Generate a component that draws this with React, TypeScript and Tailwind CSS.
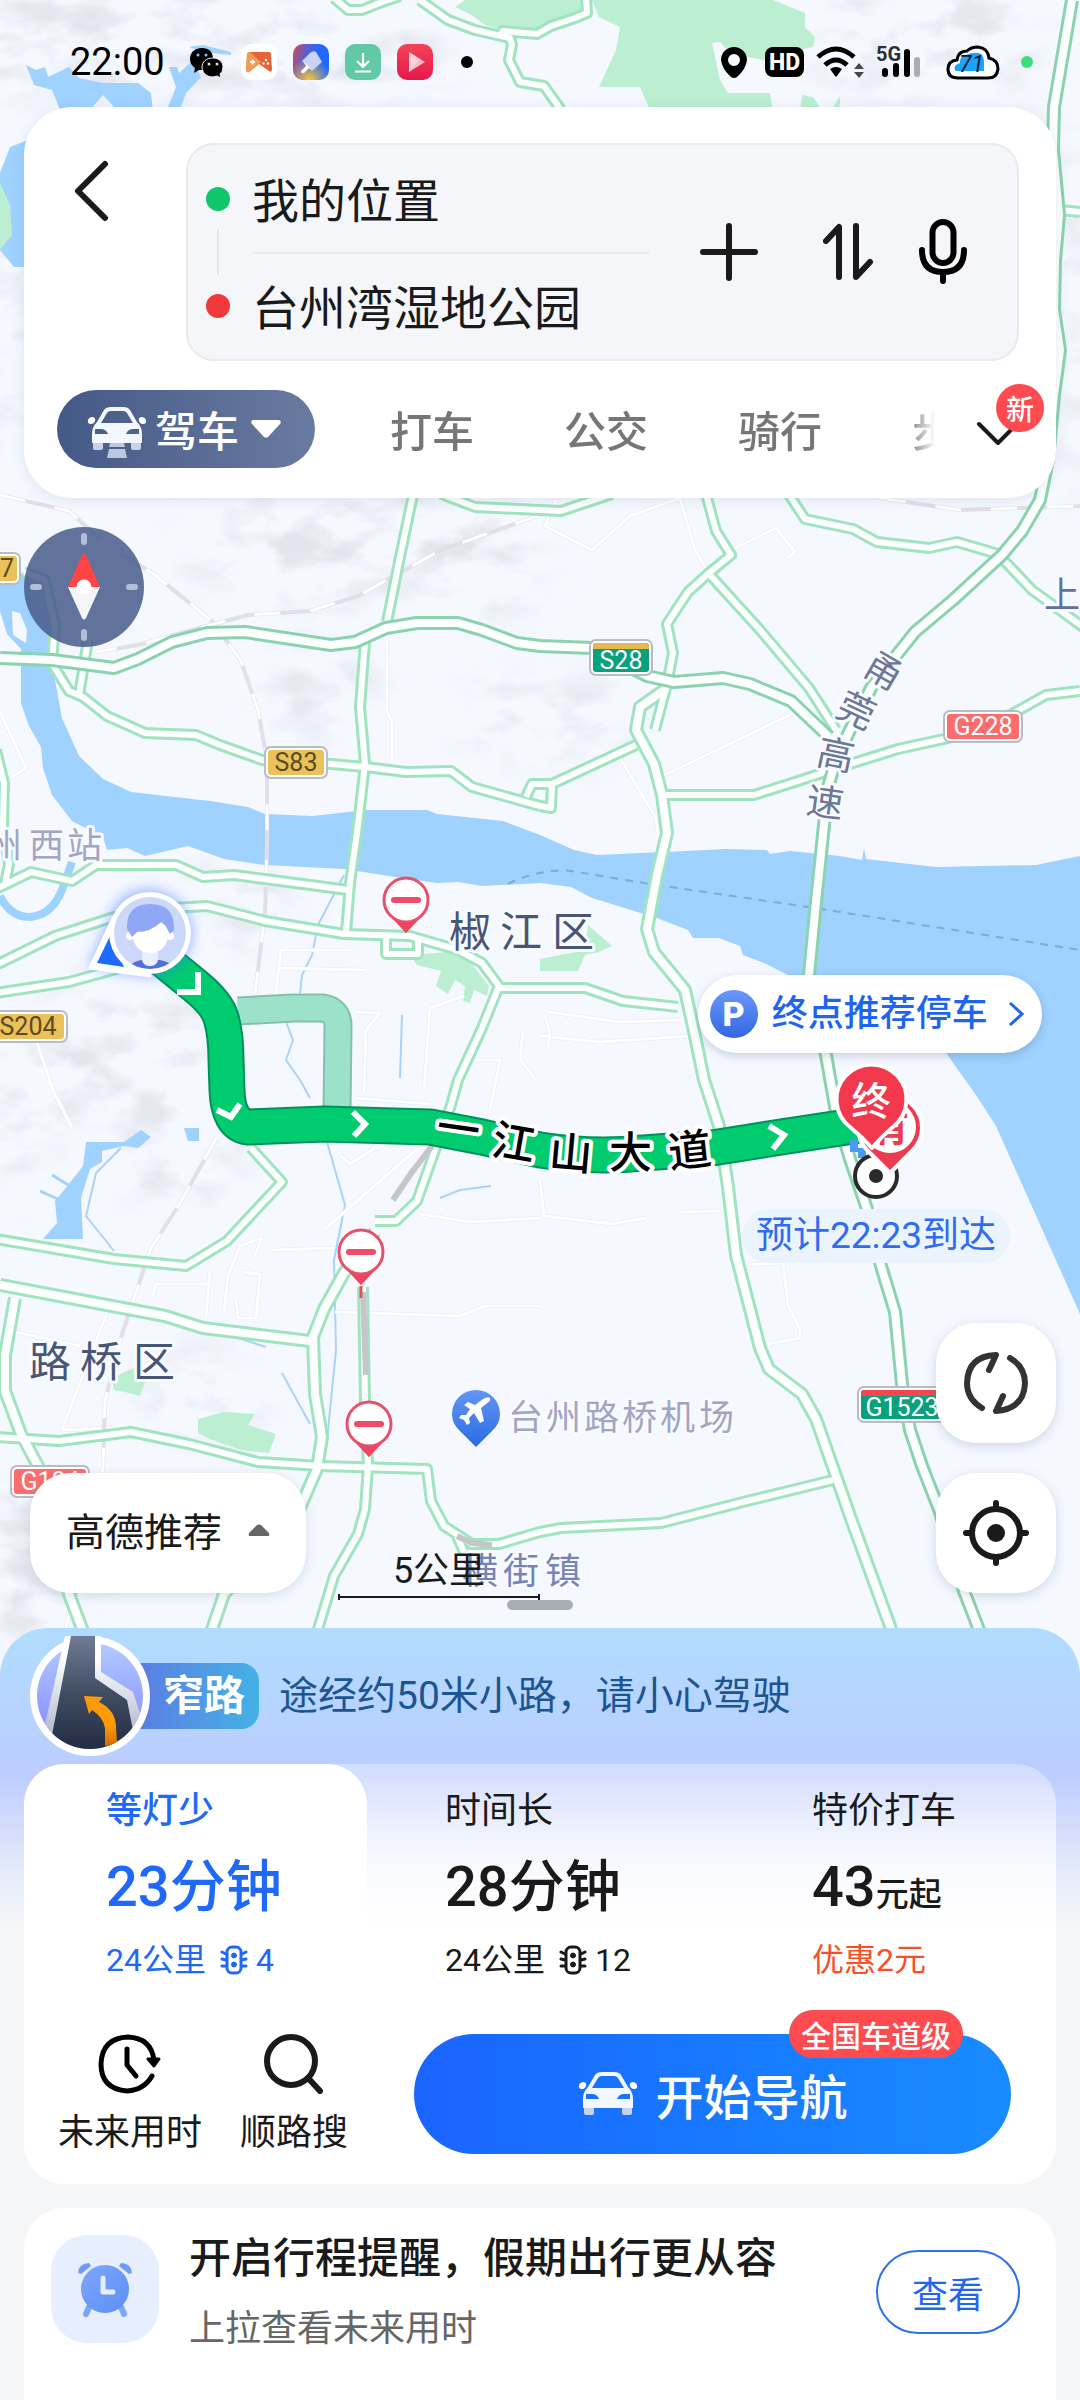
import React from "react";

const FONT = "font-[Roboto,'Noto_Sans_CJK_SC',sans-serif]";

/* ---------- map data ---------- */

const EXPRESSWAYS = [
  "M1072 0 L1054 107 L1053 150 L1059 215 L1055 260 L1054 310 L1060 350 L1054 395 L1048 460 L1040 500 L1022 531 L1002 555 L953 600 L915 632 L895 657 L871 688 L850 730 L836 760 L828 787 L824 825 L816 902 L809 975 L816 1017 L826 1055 L836 1112 L850 1159 L867 1209 L881 1266 L895 1312 L902 1384 L910 1430 L922 1466 L940 1512 L964 1591 L979 1630 L1000 1680",
  "M0 658 L52 660 L114 668 L138 659 L172 642 L207 633 L245 632 L331 645 L355 642 L386 628 L417 623 L458 623 L482 630 L517 643 L540 646 L592 648 L647 676 L674 682 L723 678 L750 684 L791 701 L829 737",
];

const MAIN_ROADS = [
  "M667 688 L640 707 L636 730 L654 764 L662 795 L667 833 L657 875 L647 929 L654 952 L685 990 L695 1036 L704 1080 L719 1126 L728 1187 L736 1255 L760 1348 L769 1369 L802 1394 L816 1419 L836 1476 L850 1516 L890 1626 L905 1680",
  "M0 1285 L165 1316 L203 1328 L310 1341",
  "M15 1298 L5 1355 L5 1391 L21 1434 L38 1466 L69 1594 L90 1650",
  "M375 1232 L344 1273 L324 1309 L313 1337 L315 1394 L322 1437 L317 1469 L300 1508 L224 1594 L205 1650",
];

const ROADS = [
  "M420 0 L448 20 L475 30 L510 38 L512 45 L509 60 L520 82 L544 86 L561 110",
  "M500 35 L503 31 L537 34 L551 26 L575 18 L587 13 L586 -4",
  "M334 -2 L348 10 L362 10 L382 2 L400 -4",
  "M1060 210 L1080 212",
  "M705 490 L716 531 L731 555 L709 573 L688 592 L667 624 L673 653 L667 684 L655 730",
  "M710 575 L760 630 L809 688 L836 730",
  "M666 795 L754 795 L798 781 L850 764 L898 749 L953 737 L1012 714 L1046 695 L1080 691",
  "M526 797 L532 784 L552 784 L636 745 M552 784 L551 808 L540 806",
  "M786 490 L805 519 L853 529 L877 542 L929 548 L957 542 L998 554 L1032 590 L1090 632",
  "M441 494 L475 507 L561 511 L612 494",
  "M414 490 L400 557 L387 622",
  "M365 642 L360 707 L365 764 L358 825 L350 883 L346 932",
  "M53 665 L69 691 L83 697 L107 716 L145 733 L196 735 L220 745 L262 760 L331 764 L365 767 L406 772 L451 771 L472 787 L540 806",
  "M24 572 L45 580 L50 604 L55 625 L52 662 M88 640 L79 695",
  "M-4 889 L31 872 L72 881 L96 865 L176 865 L203 877 L234 875 L348 890",
  "M-4 750 L4 783 L3 825 L9 864 L5 884",
  "M-4 965 L55 936 L114 917 L172 908 L207 906 L265 921 L344 934 L410 936 L458 950 L482 963 L499 986 L482 1028 L458 1080 L451 1105 L417 1201 L396 1221 L375 1221",
  "M386 936 L386 954 L418 954 L418 940",
  "M-4 993 L69 982 L131 965",
  "M499 988 L585 988 L623 1001 L678 1007",
  "M-4 1239 L114 1259 L186 1266 L227 1241 L282 1182 L251 1148",
  "M-4 1437 L59 1441 L131 1432 L189 1444 L258 1462 L320 1466 L427 1469 L431 1501 L444 1526 L472 1544 L499 1544 L540 1532 L561 1528 L661 1523 L747 1501 L833 1480",
  "M457 1536 L464 1552",
  "M363 1287 L365 1401 L368 1466 L365 1509 L358 1534 L334 1576 L319 1626 L305 1670",
];

const LANES = [
  "M556 500 L545 526 L592 550 L630 516 L680 498 L695 550 L710 575",
  "M731 550 L776 528 L795 552 L788 558",
  "M667 774 L800 710 M620 758 L656 818 L658 835",
  "M387 640 L387 712 L392 722 L392 762",
  "M275 1000 L281 950 L350 950 M278 968 L365 970",
  "M355 1012 L380 1013 L366 1030 L364 1092 M356 1098 L430 1104 M424 1090 L430 1008 L464 996",
  "M490 1110 L500 1060 L476 1060 M523 1030 L520 1060 L536 1080",
  "M545 1015 L550 1034 L548 1048 M548 1012 L620 1022 L682 1020 M540 1036 L600 1042 L690 1036",
  "M325 1229 L418 1148 M340 1155 L350 1164 L375 1148 M272 1250 L334 1248 M420 1214 L470 1222 L540 1218",
  "M152 1298 L156 1284 L208 1284 M206 1316 L210 1272 M224 1312 L228 1276 L240 1246 L262 1238 L254 1258 M236 1300 L238 1318 L256 1318 L260 1274 L244 1272",
  "M335 1312 L460 1316 L485 1306 L540 1306",
  "M15 1332 L80 1346 M108 1310 L62 1430 L112 1428",
  "M540 1180 L544 1216 L612 1224 L646 1218 M681 1212 L720 1211",
  "M745 1265 L783 1263 L788 1305 L800 1330 L800 1338 L768 1344",
  "M48 1080 L72 1128 M36 1040 L56 1098 M0 712 L26 768 L10 778",
];

const STREAMS = [
  "M121 1148 L96 1173 L86 1216 L114 1251",
  "M344 875 L318 925 L312 955 L302 975 L300 993",
  "M286 1022 L293 1040 L286 1060 L300 1080 L310 1098",
  "M402 1015 L400 1078 M327 1142 L345 1205 L334 1260 L336 1350 L326 1450",
  "M440 1198 L460 1190 L491 1186",
  "M282 1373 L310 1424 M238 1338 L266 1347",
];

const RAILS = [
  "M0 495 L69 511 L103 542 L155 575 L213 622 L241 661 L258 710 L267 760 L267 844 L265 913 L255 994",
  "M217 1137 L179 1205 L151 1248 L121 1337 L105 1401 L103 1466 L92 1540 L62 1640",
  "M540 515 L441 550 L358 596 L310 611 L248 615 L207 626 L138 645 L96 652",
  "M880 498 L960 510 L1080 506",
];

const HILLS: [number, number, number, number][] = [
  [120, 40, 190, 70],
  [330, 60, 120, 50],
  [920, 40, 120, 60],
  [1070, 300, 20, 200],
  [10, 350, 20, 140],
  [330, 545, 150, 60],
  [490, 560, 50, 60],
  [320, 690, 60, 40],
  [520, 720, 60, 40],
  [570, 720, 60, 40],
  [120, 1050, 100, 70],
  [180, 1160, 60, 50],
  [30, 1560, 70, 90],
  [200, 1400, 60, 50],
  [20, 1120, 40, 60],
  [240, 900, 50, 40],
];

function Shield({ x, y, w, label, kind }: { x: number; y: number; w: number; label: string; kind: "yellow" | "red" | "greenYellow" | "greenRed" }) {
  const strip = kind === "greenYellow" || kind === "greenRed";
  const h = strip ? 37 : 33;
  const fill = kind === "yellow" ? "#ebc15a" : kind === "red" ? "#fd6d6d" : "#08a17d";
  return (
    <g>
      <rect x={x + 1} y={y + 1} width={w - 2} height={h - 2} rx="6" fill="#fff" stroke="#b9bcc4" strokeWidth="2" />
      <rect x={x + 4} y={y + 4} width={w - 8} height={h - 8} rx="3" fill={fill} />
      {strip && <path d={`M${x + 4} ${y + 10} v-3 q0 -3 3 -3 h${w - 14} q3 0 3 3 v3 z`} fill={kind === "greenYellow" ? "#e4b94f" : "#ef4850"} />}
      <text x={x + w / 2} y={y + h - (strip ? 7 : 8)} textAnchor="middle" fontSize="25" className="font-[Roboto,sans-serif]" fill={kind === "yellow" ? "#5b4a26" : "#fff"}>
        {label}
      </text>
    </g>
  );
}

function NoEntryPin({ x, y }: { x: number; y: number }) {
  return (
    <g transform={`translate(${x} ${y})`}>
      <path d="M-14 17 H14 L0 33 Z" fill="#ec4660" />
      <circle r="22" fill="#fff" stroke="#e8506a" strokeWidth="3" />
      <path d="M-15 17 Q0 29 15 17 L0 33 Z" fill="#ec4660" />
      <path d="M-12 0 H12" stroke="#f04c66" strokeWidth="6" strokeLinecap="round" />
    </g>
  );
}

function MapCanvas() {
  return (
    <svg viewBox="0 0 1080 1680" className="absolute left-0 top-0 w-full font-['Noto_Sans_CJK_SC',sans-serif]" aria-hidden="true">
      <defs>
        <filter id="relief" x="-20%" y="-20%" width="140%" height="140%">
          <feGaussianBlur in="SourceGraphic" stdDeviation="22" result="soft" />
          <feTurbulence type="fractalNoise" baseFrequency="0.018 0.03" numOctaves="4" seed="8" result="noise" />
          <feColorMatrix in="noise" type="matrix" values="0 0 0 0 0.70  0 0 0 0 0.71  0 0 0 0 0.77  3.4 0 0 0 -1.5" result="rock" />
          <feComposite in="rock" in2="soft" operator="in" />
        </filter>
        <filter id="glow" x="-60%" y="-60%" width="220%" height="220%">
          <feGaussianBlur stdDeviation="7" />
        </filter>
        <linearGradient id="poi" x1="0" y1="0" x2="0" y2="1">
          <stop offset="0" stopColor="#6296f6" />
          <stop offset="1" stopColor="#2b6be4" />
        </linearGradient>
        <clipPath id="face">
          <circle cx="150" cy="933" r="36" />
        </clipPath>
      </defs>

      <rect width="1080" height="1680" fill="#f5f8ff" />
      <g filter="url(#relief)" opacity="0.65">
        {HILLS.map(([cx, cy, rx, ry], i) => (
          <ellipse key={i} cx={cx} cy={cy} rx={rx} ry={ry} fill="#000" />
        ))}
      </g>

      <g fill="#9fd2ff">
        <path d="M0 584 L24 572 L48 588 L52 653 L55 680 L62 718 L79 756 L103 779 L131 792 L210 801 L248 807 L265 814 L313 816 L365 810 L427 810 L437 814 L503 821 L540 835 L574 850 L597 855 L685 851 L726 849 L767 850 L770 854 L790 851 L840 856 L862 860 L864 848 L866 859 L936 867 L1036 865 L1080 856 V1314 L996 1126 L976 1095 L946 1053 L860 1010 L784 973 L764 963 L743 955 L740 946 L719 938 L693 938 L688 930 L654 917 L592 898 L571 887 L540 883 L482 886 L458 882 L437 883 L389 876 L344 869 L265 865 L224 859 L188 846 L145 856 L127 848 L107 850 L103 837 L72 821 L52 795 L43 768 L41 747 L29 726 L21 703 L21 665 L21 649 L7 634 L0 611 Z" />
        <path d="M26 65 L36 70 L45 67 L48 77 L69 67 L79 78 L103 83 L138 83 L151 93 L153 112 L115 108 L103 95 L90 110 H60 L52 90 L34 85 Z" />
        <path d="M169 67 H177 L179 73 L193 60 L201 77 L186 93 L179 112 H166 L176 87 Z" />
        <path d="M189 47 L203 45 L231 52 V55 L203 52 Z" />
        <path d="M28 140 L10 147 L0 173 V250 L14 267 H28 Z" />
        <path d="M86 1142 H124 L141 1130 L151 1137 L138 1148 L124 1146 L102 1151 V1162 L90 1169 L81 1198 L83 1239 L43 1239 L57 1223 L55 1201 L69 1184 L83 1166 Z" />
        <path d="M184 1128 H199 V1141 H188 Z" />
      </g>
      <path d="M12 611 L20 613 L27 630 L26 643 L13 635 Z" fill="#f5f8ff" />
      <path d="M0 896 Q10 917 30 917 Q52 915 62 890 L72 862" fill="none" stroke="#9fd2ff" strokeWidth="8" />
      <path d="M40 1191 L60 1200 M52 1175 L70 1186" stroke="#9fd2ff" strokeWidth="3" />

      <g fill="#bcefd2">
        <path d="M465 0 L455 7 L470 14 L485 25 L513 33 L544 30 L579 15 L589 0 Z" />
        <path d="M592 0 L599 17 L620 27 L616 50 L599 87 H640 L651 112 H773 L770 93 L728 93 L720 80 L712 43 L720 42 L730 53 L763 60 L773 55 L813 47 L815 37 L805 27 V13 L773 0 Z" />
        <path d="M800 112 L802 95 L813 97 L823 112 Z M830 112 L840 96 V112 Z" />
        <path d="M0 183 L10 205 L12 235 L0 250 Z" />
        <path d="M410 955 L448 952 L468 959 L489 986 L487 996 L474 990 L470 1003 L463 1001 L465 986 L455 980 L448 994 L436 986 L441 971 L417 965 Z" />
        <path d="M588 925 L612 946 L599 952 L585 955 L578 971 H540 V959 L585 950 Z" />
        <path d="M112 1380 L122 1373 L140 1366 L146 1380 L140 1396 L125 1392 L114 1390 Z" />
        <path d="M198 1419 L224 1412 L255 1414 L248 1425 L276 1434 L269 1453 L241 1450 L210 1439 L198 1433 Z" />
      </g>

      <g fill="none" strokeLinejoin="round">
        <g stroke="#a9d3fb" strokeWidth="2">
          {STREAMS.map((d) => (
            <path key={d} d={d} />
          ))}
        </g>
        <path d="M508 884 Q530 872 565 870 L650 884 L815 908 L1080 950" stroke="#7fabd6" strokeWidth="2" strokeDasharray="8 7" />
        <g stroke="#e6e8f0" strokeWidth="4">
          {LANES.map((d) => (
            <path key={d} d={d} />
          ))}
        </g>
        <g stroke="#fff" strokeWidth="3">
          {LANES.map((d) => (
            <path key={d} d={d} />
          ))}
        </g>
        <g stroke="#e2dfe8" strokeWidth="4">
          {RAILS.map((d) => (
            <path key={d} d={d} />
          ))}
        </g>
        <g stroke="#fff" strokeWidth="3" strokeDasharray="26 30">
          {RAILS.map((d) => (
            <path key={d} d={d} />
          ))}
        </g>

        <g stroke="#9fe4bf">
          {ROADS.map((d) => (
            <path key={d} d={d} strokeWidth="12" />
          ))}
          {MAIN_ROADS.map((d) => (
            <path key={d} d={d} strokeWidth="14" />
          ))}
        </g>
        <g stroke="#fcfffd">
          {ROADS.map((d) => (
            <path key={d} d={d} strokeWidth="6" />
          ))}
          {MAIN_ROADS.map((d) => (
            <path key={d} d={d} strokeWidth="8" />
          ))}
        </g>
        {EXPRESSWAYS.map((d) => (
          <g key={d}>
            <path d={d} stroke="#8bd3ae" strokeWidth="14" />
            <path d={d} stroke="#fcfffd" strokeWidth="8" />
          </g>
        ))}
        <path d="M363 1292 L366 1375 M432 1146 L412 1172 L393 1200 M457 1536 L472 1543 L492 1545" stroke="#c5c6ca" strokeWidth="6" />
        <path d="M361 1286 V1298" stroke="#e0525c" strokeWidth="3" />
      </g>

      <g stroke="#f8faff" strokeWidth="6" strokeLinejoin="round" paintOrder="stroke">
        <text x="449 500 552" y="947" fontSize="42" fill="#485676">椒江区</text>
        <text x="29 80 133" y="1377" fontSize="42" fill="#485676">路桥区</text>
        <text x="-13 29 67" y="858" fontSize="35" fill="#a1a5c3">州西站</text>
        <text x="508 546 584 622 660 699" y="1430" fontSize="35" fill="#a1a5c3">台州路桥机场</text>
        <text x="462 503 545" y="1584" fontSize="36" fill="#7584b6">横街镇</text>
        <text x="1044" y="608" fontSize="36" fill="#5f6fa0">上</text>
        <text x="861 834 815 805" y="673 715 764 813" rotate="30 25 12 8" fontSize="37" fill="#6d7896">甬莞高速</text>
      </g>

      <Shield x={264} y={746} w={64} label="S83" kind="yellow" />
      <Shield x={-12} y={1010} w={80} label="S204" kind="yellow" />
      <Shield x={-50} y={552} w={71} label="S327" kind="yellow" />
      <Shield x={589} y={639} w={64} label="S28" kind="greenYellow" />
      <Shield x={943} y={710} w={80} label="G228" kind="red" />
      <Shield x={857} y={1386} w={90} label="G1523" kind="greenRed" />
      <Shield x={10} y={1465} w={80} label="G104" kind="red" />

      <g fill="none" strokeLinejoin="round">
        <path d="M238 1011 L293 1008 L322 1008 Q338 1010 338 1026 L337 1115" stroke="#86c0aa" strokeWidth="29" />
        <path d="M238 1011 L293 1008 L322 1008 Q338 1010 338 1026 L337 1115" stroke="#9ce1ca" strokeWidth="25" />
        <path d="M155 953 L193 984 Q217 1003 221 1018 Q226 1034 226 1060 L227 1090 Q228 1124 248 1127 L324 1124 L430 1127 L482 1137 L540 1150 Q592 1158 643 1153 L712 1148 L781 1137 L860 1125" stroke="#00905b" strokeWidth="37" />
        <path d="M155 953 L193 984 Q217 1003 221 1018 Q226 1034 226 1060 L227 1090 Q228 1124 248 1127 L324 1124 L430 1127 L482 1137 L540 1150 Q592 1158 643 1153 L712 1148 L781 1137 L860 1125" stroke="#00cb6e" strokeWidth="33" />
        <g stroke="#fff" strokeWidth="6" strokeLinejoin="miter">
          <path d="M177 992 L198 992 L198 972" />
          <path d="M217 1110 L231 1117 L240 1104" />
          <path d="M353 1112 L365 1124 L354 1136" />
          <path d="M769 1126 L784 1135 L773 1149" />
        </g>
      </g>
      <text x="435 490 548 609 670" y="1141 1154 1167 1168 1168" rotate="8 10 5 0 -6" fontSize="43" fontWeight="500" fill="#000" stroke="#fff" strokeWidth="8" strokeLinejoin="round" paintOrder="stroke">
        一江山大道
      </text>

      <NoEntryPin x={406} y={900} />
      <NoEntryPin x={361} y={1252} />
      <NoEntryPin x={369} y={1424} />

      <path d="M476 1447 L460 1431 Q452 1424 452 1414 A24 24 0 0 1 500 1414 Q500 1424 492 1431 Z" fill="url(#poi)" />
      <path d="M464 1405 l4 -3 7 3 8 -6 q5 -3 7 -1 q1 3 -4 6 l-5 4 3 13 -4 2 -6 -10 -5 5 1 5 -3 2 -3 -5 -5 -2 2 -3 5 0 4 -6 z" fill="#fff" />

      <g>
        <path d="M89 967 L116 905 A43 43 0 1 1 146 976 Z" fill="#3e74ff" opacity="0.55" filter="url(#glow)" />
        <path d="M90 968 L113 918 L150 976 Z" fill="#fff" stroke="#fff" strokeWidth="3" strokeLinejoin="round" />
        <path d="M97 963 L110 936 L124 967 Z" fill="#1e6bff" />
        <circle cx="150" cy="933" r="41" fill="#fff" />
        <circle cx="150" cy="933" r="36" fill="#ccd8f9" />
        <g clipPath="url(#face)">
          <path d="M126 970 Q134 958 150 960 Q168 958 176 970 Z" fill="#5470df" />
          <rect x="142" y="946" width="16" height="20" rx="7" fill="#e9effc" />
          <path d="M131 928 Q152 930 162 922 L169 930 Q168 953 150 953 Q133 953 131 928 Z" fill="#fff" />
          <circle cx="130" cy="936" r="4" fill="#fff" />
          <circle cx="170" cy="936" r="4" fill="#fff" />
          <path d="M127 929 Q126 904 150 904 Q175 904 174 930 L170 934 L165 925 L161 922 Q151 932 137 932 L132 937 Z" fill="#8fa7f5" />
        </g>
      </g>

      <path d="M850 1140 h8 v8 h8 v10 h-8 v-6 h-8 z" fill="#4b9bf5" />
      <circle cx="876" cy="1176" r="21" fill="#fff" stroke="#2a2a2a" strokeWidth="4" />
      <circle cx="876" cy="1176" r="7" fill="#2a2a2a" />
      <path d="M890 1173 L868 1151 A32 32 0 1 1 912 1151 Z" fill="#ee3a4e" stroke="#fff" strokeWidth="4" strokeLinejoin="round" />
      <circle cx="890" cy="1127" r="26" fill="#fff" />
      <text x="890" y="1141" textAnchor="middle" fontSize="38" fontWeight="700" fill="#ee3a4e">有</text>
      <path d="M872 1148 Q862 1137 850 1127 A35 35 0 1 1 893 1127 Q882 1136 872 1148 Z" fill="#f2384d" stroke="#fff" strokeWidth="4" strokeLinejoin="round" />
      <text x="871" y="1115" textAnchor="middle" fontSize="39" fontWeight="500" fill="#fff">终</text>
    </svg>
  );
}

/* ---------- icons ---------- */

function CarIcon({ className, lane = false }: { className?: string; lane?: boolean }) {
  return (
    <svg viewBox="0 0 60 52" className={className} aria-hidden="true">
      <path d="M6 32 h10 v9 q0 2 -2 2 h-6 q-2 0 -2 -2 z M44 32 h10 v9 q0 2 -2 2 h-6 q-2 0 -2 -2 z" fill="#c8d3ea" />
      <path d="M1 13 q1 -3 5 -3 q3 1 2 4 q-1 3 -4 3 q-4 0 -3 -4 z M59 13 q-1 -3 -5 -3 q-3 1 -2 4 q1 3 4 3 q4 0 3 -4 z" fill="#fff" />
      <path
        fillRule="evenodd"
        d="M17 3 Q19 0 24 0 H36 Q41 0 43 3 L50 15 Q55 20 55 27 V36 H5 V27 Q5 20 10 15 Z M20 6 L14 16 H46 L40 6 Q39 4 36 4 H24 Q21 4 20 6 Z M8 22 V27 H21 Q19 22 14 22 Z M52 22 V27 H39 Q41 22 46 22 Z"
        fill="#f3f7ff"
      />
      {lane && <path d="M23 36 H37 L38 40 H22 Z M22 42 H38 L40 51 H20 Z" fill="#bcc8df" />}
    </svg>
  );
}

function TrafficLight() {
  return (
    <svg viewBox="0 0 28 30" className="h-[30px] w-7" fill="none" stroke="currentColor" strokeWidth="3" strokeLinecap="round" aria-hidden="true">
      <rect x="7" y="2" width="14" height="26" rx="5" />
      <path d="M2 7 L6 9 M2 14 L6 15 M2 21 L6 21 M26 7 L22 9 M26 14 L22 15 M26 21 L22 21" strokeWidth="3" />
      <circle cx="14" cy="10.500" r="2.500" fill="currentColor" strokeWidth="1" />
      <circle cx="14" cy="19.500" r="2.500" fill="currentColor" strokeWidth="1" />
    </svg>
  );
}

function StatusBar() {
  return (
    <div className="relative flex h-[107px] items-center px-[70px] pt-[17px] text-black">
      <time className="mr-6 text-[38px] leading-[40px]">22:00</time>
      <div className="flex items-center gap-4">
        <svg viewBox="0 0 36 36" className="size-9" aria-label="微信">
          <path d="M13 4 C5 4 1 9 1 15 C1 19 3 22 6 24 L5 29 L10 26 Q20 27 24 18 Q25 4 13 4 Z" fill="#000" />
          <path d="M24 14 C17 14 13 18 13 23 C13 29 18 33 24 33 L28 32 L32 34 L31 30 Q34 28 34 23 C34 18 30 14 24 14 Z" fill="#000" stroke="#e7effa" strokeWidth="1" />
          <circle cx="9" cy="11" r="1.500" fill="#7fc4ff" />
          <circle cx="17" cy="11" r="1.500" fill="#7fc4ff" />
          <circle cx="20" cy="20" r="1.500" fill="#f6d9a5" />
          <circle cx="28" cy="20" r="1.500" fill="#f6d9a5" />
        </svg>
        <svg viewBox="0 0 36 36" className="size-9" aria-label="游戏">
          <rect width="36" height="36" rx="10" fill="#fff" />
          <path d="M9 8 H28 Q30 8 30 11 L31 25 Q31 29 28 27 L18 20 L8 28 Q5 29 5 25 L6 11 Q6 8 9 8 Z" fill="#e8633a" />
          <path d="M9 8 L20 18 L8 28 Q5 29 5 25 L6 11 Q6 8 9 8 Z" fill="#f59a55" />
          <path d="M9 18 h5 M11.500 15.500 v5" stroke="#fff" strokeWidth="2" />
          <g fill="#fff">
            <circle cx="25" cy="16" r="1.200" />
            <circle cx="22.500" cy="19.500" r="1.200" />
            <circle cx="27" cy="19.500" r="1.200" />
          </g>
        </svg>
        <svg viewBox="0 0 36 36" className="size-9" aria-label="主题">
          <defs>
            <linearGradient id="paint" x1="0" y1="0" x2="1" y2="0.300">
              <stop offset="0" stopColor="#d8464e" />
              <stop offset="0.400" stopColor="#5a5fd0" />
              <stop offset="0.700" stopColor="#2169fb" />
            </linearGradient>
            <radialGradient id="sun" cx="0.450" cy="1" r="0.600">
              <stop offset="0" stopColor="#ffc531" />
              <stop offset="1" stopColor="#ffc531" stopOpacity="0" />
            </radialGradient>
          </defs>
          <rect width="36" height="36" rx="10" fill="url(#paint)" />
          <rect width="36" height="36" rx="10" fill="url(#sun)" />
          <path d="M17 9 Q20 6 23 8 L29 18 L19 27 L9 17 Z" fill="#c9d3f3" />
          <path d="M10 17 L19 26 L16 24 L11 29 Q8 30 8 27 L13 22 Z" fill="#fff" />
        </svg>
        <svg viewBox="0 0 36 36" className="size-9" aria-label="下载">
          <rect width="36" height="36" rx="10" fill="#62c9a7" />
          <path d="M18 9 V23 M12 17 L18 23 L24 17 M10 27.500 H26" fill="none" stroke="#fff" strokeWidth="2.200" />
        </svg>
        <svg viewBox="0 0 36 36" className="size-9" aria-label="视频">
          <defs>
            <linearGradient id="vid" x1="0" y1="0" x2="0" y2="1">
              <stop offset="0" stopColor="#f54257" />
              <stop offset="1" stopColor="#e41a4c" />
            </linearGradient>
          </defs>
          <rect width="36" height="36" rx="10" fill="url(#vid)" />
          <path d="M12 8 L28 18 L12 28 Z" fill="#fbb9c2" />
          <path d="M12 8 L23 15 L12 28 Z" fill="#fde3e6" opacity="0.600" />
        </svg>
        <span className="ml-3 size-3 rounded-full bg-black" />
      </div>
      <div className="ml-auto -mr-[23px] flex items-center">
        <svg viewBox="0 0 26 31" className="mr-[18px] h-[31px] w-[26px]" aria-label="定位">
          <path fillRule="evenodd" d="M13 0 A13 13 0 0 1 26 13 Q25 22 16 30 Q13 32 10 30 Q1 22 0 13 A13 13 0 0 1 13 0 Z M13 7 A6 6 0 1 0 13 19 A6 6 0 1 0 13 7 Z" />
        </svg>
        <span className="mr-3 flex h-[30px] w-[39px] items-center justify-center rounded-lg bg-black text-[23px] font-extrabold leading-none text-white">HD</span>
        <svg viewBox="0 0 48 32" className="mr-3 h-8 w-12" aria-label="无线网络">
          <g fill="none" stroke="#000" strokeWidth="5">
            <path d="M2 11 Q20 -5 38 11" />
            <path d="M9 19 Q20 9 31 19" />
          </g>
          <path d="M14 23 Q20 19 26 23 L21 30 Q20 31 19 30 Z" />
          <path d="M38 23 L43 17 L48 23 Z M38 26 L43 32 L48 26 Z" fill="#44474e" />
        </svg>
        <svg viewBox="0 0 46 34" className="mr-6 h-[34px] w-[46px]" aria-label="5G 信号">
          <text x="0" y="16" fontSize="20" fontWeight="700" fill="#2b2e35">5G</text>
          <rect x="6" y="23" width="6" height="9" rx="3" />
          <rect x="17" y="18" width="6" height="14" rx="3" />
          <rect x="28" y="4" width="6" height="28" rx="3" />
          <rect x="38" y="12" width="6" height="20" rx="3" fill="#a9acb3" />
        </svg>
        <svg viewBox="0 0 54 35" className="mr-[21px] h-[35px] w-[54px]" aria-label="电量 71">
          <path d="M12 33 Q2 33 2 24 Q2 16 11 15 Q12 6 21 6 Q25 2 32 2 Q42 3 43 13 Q52 15 52 24 Q51 33 42 33 Z" fill="#fff" stroke="#000" strokeWidth="3" />
          <path d="M9 25 Q7 20 14 18 Q14 10 20 10 Q28 6 35 9 Q38 11 38 18 V26 H10 Z" fill="#1aa3fb" />
          <text x="13" y="27" fontSize="23" fontStyle="italic" fill="#05182c">71</text>
        </svg>
        <span className="size-3 rounded-full bg-[#3ddc7c]" />
      </div>
    </div>
  );
}

function SearchCard() {
  return (
    <header className="relative mx-6 rounded-[48px] bg-white pb-[30px] pt-9 font-['Noto_Sans_CJK_SC',sans-serif] shadow-[0_2px_14px_rgba(60,80,120,0.12)]">
      <div className="flex items-start pl-7 pr-[37px]">
        <button aria-label="返回" className="mr-[42px] flex h-24 w-[92px] items-center pl-[21px]">
          <svg viewBox="0 0 36 64" className="h-16 w-9" fill="none" stroke="#1a1a1a" strokeWidth="6" strokeLinecap="round" strokeLinejoin="round">
            <path d="M32 5 L5 32 L32 59" />
          </svg>
        </button>
        <div className="flex flex-1 items-center rounded-[28px] border-2 border-[#e8eaee] bg-[#f4f6fa] pr-[50px]">
          <div className="relative flex min-w-0 flex-1 flex-col text-[47px] text-[#1a1a1a]">
            <label className="flex h-[107px] items-center gap-[22px] pl-[18px]">
              <span className="size-6 shrink-0 rounded-full bg-[#11c56c]" />
              <input aria-label="起点" defaultValue="我的位置" className="w-full bg-transparent outline-none" />
            </label>
            <label className="flex h-[107px] items-center gap-[22px] pl-[18px]">
              <span className="size-6 shrink-0 rounded-full bg-[#f03739]" />
              <input aria-label="终点" defaultValue="台州湾湿地公园" className="w-full bg-transparent outline-none" />
            </label>
            <span className="absolute left-[29px] top-[84px] h-[46px] w-0.5 bg-[#e4e6eb]" />
            <span className="absolute left-16 right-0 top-[107px] h-0.5 bg-[#ebedf2]" />
          </div>
          <div className="ml-[50px] flex items-center">
            <button aria-label="添加途经点">
              <svg viewBox="0 0 58 58" className="size-[58px]" stroke="#1a1a1a" strokeWidth="6" strokeLinecap="round">
                <path d="M29 3 V55 M3 29 H55" />
              </svg>
            </button>
            <button aria-label="交换起终点" className="ml-[65px]">
              <svg viewBox="0 0 50 58" className="h-[58px] w-[50px]" fill="none" stroke="#1a1a1a" strokeWidth="6" strokeLinecap="round" strokeLinejoin="round">
                <path d="M3 18 L16 4 V54 M33 3 V54 L47 39" />
              </svg>
            </button>
            <button aria-label="语音输入" className="ml-[46px]">
              <svg viewBox="0 0 48 66" className="h-[66px] w-12" fill="none" stroke="#000" strokeWidth="6" strokeLinecap="round">
                <rect x="13.500" y="3" width="21" height="41" rx="10.500" />
                <path d="M3 31 Q3 53 24 53 Q45 53 45 31 M24 53 V62" />
              </svg>
            </button>
          </div>
        </div>
      </div>

      <div className="mt-[29px] flex h-[78px] items-center pl-[33px]">
        <button className="flex h-[78px] w-[258px] shrink-0 items-center rounded-full bg-linear-to-r from-[#455987] to-[#6a7ba1] pl-[30px] text-[42px] font-medium leading-none text-white">
          <CarIcon lane className="mr-2 mt-2 h-[52px] w-[60px]" />
          驾车
          <svg viewBox="0 0 34 22" className="ml-2.5 h-[22px] w-[34px]" fill="#fff">
            <path d="M4 2 H30 Q33 3 31 6 L19 19 Q17 20 15 19 L3 6 Q1 3 4 2 Z" />
          </svg>
        </button>
        <nav className="ml-[75px] flex flex-1 gap-[90px] overflow-hidden whitespace-nowrap text-[42px] font-medium leading-[60px] text-[#767676] [mask-image:linear-gradient(to_right,black_95%,transparent)]">
          <button>打车</button>
          <button>公交</button>
          <button>骑行</button>
          <button>步行</button>
        </nav>
        <button aria-label="更多出行方式" className="relative ml-[41px] h-[78px] w-20 shrink-0">
          <svg viewBox="0 0 44 26" className="mt-2.5 h-[26px] w-11" fill="none" stroke="#1a1a1a" strokeWidth="4" strokeLinecap="round" strokeLinejoin="round">
            <path d="M3 3 L22 22 L41 3" />
          </svg>
          <span className="absolute -top-1.5 left-5 flex size-12 items-center justify-center rounded-full bg-[#fd4b50] text-[28px] font-medium leading-none text-white">新</span>
        </button>
      </div>
    </header>
  );
}

function MapControls() {
  return (
    <div className="relative flex-1">
      <button aria-label="指南针" className="ml-6 mt-[29px] block size-[120px]">
        <svg viewBox="0 0 120 120" className="size-[120px]">
          <circle cx="60" cy="60" r="60" fill="#485c8c" opacity="0.860" />
          <path d="M60 9 V15 M60 105 V111 M9 60 H15 M105 60 H111" stroke="#b4bed6" strokeWidth="6" strokeLinecap="round" />
          <path d="M44 60 L58 28 Q60 26 62 28 L76 60 Z" fill="#ff4546" />
          <path d="M44 60 L58 91 Q60 94 62 91 L76 60 Z" fill="#f5f6f8" />
          <circle cx="60" cy="60" r="7.500" fill="#fff" />
        </svg>
      </button>

      <button className="absolute left-[64.600%] top-[477px] flex h-[78px] items-center rounded-full bg-white pl-3 pr-[18px] text-[36px] font-medium leading-none text-[#1d64f5] shadow-[0_3px_10px_rgba(60,80,120,0.250)]">
        <span className="mr-3.5 flex size-12 items-center justify-center rounded-full bg-linear-to-b from-[#6a97fa] to-[#3366e2] text-[34px] font-black text-white">P</span>
        终点推荐停车
        <svg viewBox="0 0 16 26" className="ml-5 h-[26px] w-4" fill="none" stroke="currentColor" strokeWidth="3">
          <path d="M2 2 L14 13 L2 24" />
        </svg>
      </button>

      <p className="absolute left-[68.700%] top-[711px] rounded-full bg-[#ebf4fc] px-3.5 text-[37px] leading-[54px] text-[#2f6cf2]">预计22:23到达</p>

      <button className="absolute bottom-[35px] left-[30px] flex h-[120px] items-center rounded-[40px] bg-white pl-9 pr-9 text-[39px] leading-none text-[#1a1a1a] shadow-[0_3px_12px_rgba(60,80,120,0.160)]">
        高德推荐
        <svg viewBox="0 0 22 12" className="mb-1.5 ml-[26px] h-3 w-[22px]" fill="#666">
          <path d="M1 11 Q0 10 2 8 L9 1 Q11 0 13 1 L20 8 Q22 10 21 12 H1 Z" />
        </svg>
      </button>

      <div className="absolute bottom-[28px] left-[338px] w-[202px] text-[#1a1a1a]">
        <p className="text-center text-[36px] leading-[46px]">5公里</p>
        <div className="h-1.5 border-x-2 border-[#1a1a1a]">
          <div className="translate-y-0.5 border-t-2 border-[#1a1a1a]" />
        </div>
      </div>
      <span className="absolute bottom-[18px] left-1/2 h-2.5 w-[66px] -translate-x-1/2 rounded-full bg-[#a9adb6]" />

      <div className="absolute bottom-[35px] right-6 flex flex-col gap-[30px]">
        <button aria-label="刷新路线" className="flex size-[120px] items-center justify-center rounded-[40px] bg-white shadow-[0_3px_12px_rgba(60,80,120,0.200)]">
          <svg viewBox="0 0 64 64" className="size-16" fill="none" stroke="#333" strokeWidth="6" strokeLinecap="round" strokeLinejoin="round">
            <path d="M18 57 Q3 48 3 32 Q4 5 32 4 L25 19" />
            <path d="M46 7 Q61 16 61 32 Q60 58 32 60 L39 45" />
          </svg>
        </button>
        <button aria-label="当前位置" className="flex size-[120px] items-center justify-center rounded-[40px] bg-white shadow-[0_3px_12px_rgba(60,80,120,0.200)]">
          <svg viewBox="0 0 66 66" className="size-[66px]" fill="none" stroke="#1a1a1a" strokeWidth="6" strokeLinecap="round">
            <circle cx="33" cy="33" r="24" />
            <path d="M33 3 V8 M33 58 V63 M3 33 H8 M58 33 H63" />
            <circle cx="33" cy="33" r="9" fill="#1a1a1a" stroke="none" />
          </svg>
        </button>
      </div>
    </div>
  );
}

function NarrowRoadIcon() {
  return (
    <svg viewBox="0 0 120 120" className="relative size-[120px] shrink-0" aria-hidden="true">
      <defs>
        <linearGradient id="sky" x1="0" y1="0" x2="0" y2="1">
          <stop offset="0" stopColor="#b3cbff" />
          <stop offset="0.700" stopColor="#8f98ff" />
        </linearGradient>
        <linearGradient id="asphalt" gradientUnits="userSpaceOnUse" x1="0" y1="0" x2="0" y2="113">
          <stop offset="0" stopColor="#6f7c95" />
          <stop offset="0.500" stopColor="#414d63" />
          <stop offset="1" stopColor="#222d42" />
        </linearGradient>
        <linearGradient id="kerb" gradientUnits="userSpaceOnUse" x1="0" y1="0" x2="0" y2="113">
          <stop offset="0.200" stopColor="#fff" />
          <stop offset="0.800" stopColor="#b9c0d2" />
        </linearGradient>
        <linearGradient id="turn" x1="0" y1="0" x2="0" y2="1">
          <stop offset="0.500" stopColor="#ff9a05" />
          <stop offset="1" stopColor="#b35308" />
        </linearGradient>
        <clipPath id="disc">
          <rect x="30" y="0" width="50" height="40" />
          <circle cx="60" cy="60" r="53" />
        </clipPath>
      </defs>
      <circle cx="60" cy="60" r="60" fill="#fff" />
      <circle cx="60" cy="60" r="53" fill="url(#sky)" />
      <g clipPath="url(#disc)">
        <path d="M35 0 H71 V36 L103 56 L116 96 V120 H8 Z" fill="url(#kerb)" />
        <path d="M41 0 H65 V42 L97 64 L108 120 H18 Z" fill="url(#asphalt)" />
        <path d="M54 60 L73 61 L69 66 Q86 74 86 92 L88 120 H75 V92 Q73 81 62 74 L59 78 Z" fill="url(#turn)" />
      </g>
    </svg>
  );
}

function RouteSheet() {
  return (
    <section className="relative rounded-t-[48px] bg-[#f5f6f8] bg-[linear-gradient(to_bottom,#b0dcff_0px,#b5d6ff_60px,#bccdff_146px,#cfdafc_190px,#e4eafa_240px,#f5f6f8_300px)]">
      <div className="flex h-[136px] items-center pl-[30px]">
        <NarrowRoadIcon />
        <strong className="-ml-10 h-[66px] rounded-r-[18px] bg-linear-to-r from-[#5c70e0] to-[#42b2e6] pl-[53px] pr-3.5 text-[41px] font-bold leading-[66px] text-white">窄路</strong>
        <p className="ml-5 text-[39px] leading-[50px] text-[#1d5592]">途经约50米小路，请小心驾驶</p>
      </div>

      <div className="mx-6 rounded-[40px] bg-[linear-gradient(to_bottom,rgba(255,255,255,0.300)_0px,rgba(255,255,255,0.700)_90px,#fff_170px)]">
        <div className="grid grid-cols-[343fr_369fr_320fr] items-start text-left text-[#1a1a1a]">
          <button className="rounded-t-[40px] bg-white pl-[82px] pt-6 text-left text-[#1e68fb]">
            <span className="block text-[36px] font-medium leading-[46px]">等灯少</span>
            <span className="mt-3 block text-[56px] font-medium leading-[82px]">23分钟</span>
            <span className="mt-2 flex items-center text-[32px] leading-[48px]">
              24公里
              <span className="ml-3.5 mr-2">
                <TrafficLight />
              </span>
              4
            </span>
          </button>
          <button className="pl-[78px] pt-6 text-left">
            <span className="block text-[36px] leading-[46px]">时间长</span>
            <span className="mt-3 block text-[56px] font-medium leading-[82px]">28分钟</span>
            <span className="mt-2 flex items-center text-[32px] leading-[48px]">
              24公里
              <span className="ml-3.5 mr-2">
                <TrafficLight />
              </span>
              12
            </span>
          </button>
          <button className="pl-[76px] pt-6 text-left">
            <span className="block text-[36px] leading-[46px]">特价打车</span>
            <span className="mt-3 block text-[56px] font-medium leading-[82px]">
              43<span className="text-[33px] leading-none">元起</span>
            </span>
            <span className="mt-2 block text-[32px] leading-[48px] text-[#fa4e26]">优惠2元</span>
          </button>
        </div>

        <div className="flex items-center rounded-b-[40px] bg-white pb-[30px] pl-[34px] pr-[45px] pt-[50px] font-['Noto_Sans_CJK_SC',sans-serif] text-[#1a1a1a]">
          <button className="flex flex-col items-center text-[36px] leading-[50px]">
            <svg viewBox="0 0 64 60" className="mb-2.5 h-[60px] w-16" fill="none" stroke="#000" strokeWidth="5" strokeLinecap="round" strokeLinejoin="round">
              <path d="M54 42 Q46 56 29 57 Q3 55 3 30 Q4 4 30 3 Q53 4 56 26" />
              <path d="M29 15 V31 L38 42" />
              <path d="M50 25 H61 L56 32 Z" fill="#000" strokeWidth="3" />
            </svg>
            未来用时
          </button>
          <button className="ml-[38px] flex flex-col items-center text-[36px] leading-[50px]">
            <svg viewBox="0 0 60 60" className="mb-2.5 size-[60px]" fill="none" stroke="#1a1a1a" strokeWidth="6" strokeLinecap="round">
              <circle cx="27" cy="27" r="24" />
              <path d="M45 45 L56 57" />
            </svg>
            顺路搜
          </button>
          <button className="relative ml-[66px] flex h-[120px] flex-1 items-center justify-center rounded-full bg-linear-to-r from-[#1b64ff] to-[#198bff] text-[48px] font-medium leading-none text-white">
            <CarIcon className="mr-[18px] mt-2 h-[52px] w-[60px]" />
            开始导航
            <span className="absolute -top-6 right-12 rounded-full bg-[#fd4b50] px-3 text-[30px] leading-[48px]">全国车道级</span>
          </button>
        </div>
      </div>

      <article className="mx-6 mt-6 flex h-48 items-start rounded-t-[40px] bg-white pl-[27px] pr-9">
        <svg viewBox="0 0 108 108" className="mt-[27px] size-[108px] shrink-0" aria-hidden="true">
          <defs>
            <linearGradient id="clock" x1="0" y1="0" x2="1" y2="1">
              <stop offset="0" stopColor="#7fa6fa" />
              <stop offset="1" stopColor="#5c8ff8" />
            </linearGradient>
          </defs>
          <rect width="108" height="108" rx="36" fill="#e7eefd" />
          <path d="M38 72 L35 79 M70 72 L73 79" stroke="#7ba4fb" strokeWidth="6" strokeLinecap="round" />
          <path d="M27 38 Q28 28 38 28 L40 31 L30 39 Z M81 38 Q80 28 70 28 L68 31 L78 39 Z" fill="#6f9bf9" />
          <circle cx="54" cy="54" r="24" fill="url(#clock)" />
          <path d="M52 43 V57 H62" fill="none" stroke="#e7eefd" strokeWidth="5" strokeLinecap="round" strokeLinejoin="round" />
        </svg>
        <div className="ml-[30px] flex-1">
          <h2 className="mt-6 text-[42px] font-medium leading-[54px] text-[#1a1a1a]">开启行程提醒，假期出行更从容</h2>
          <p className="mt-[18px] text-[36px] leading-[50px] text-[#666]">上拉查看未来用时</p>
        </div>
        <button className="mt-[42px] h-[84px] w-36 rounded-full border-2 border-[#2e70ea] font-['Noto_Sans_CJK_SC',sans-serif] text-[36px] leading-none text-[#1f66f2]">查看</button>
      </article>
    </section>
  );
}

export default function App() {
  return (
    <main className={`relative flex min-h-screen flex-col overflow-hidden bg-[#f5f8ff] ${FONT}`}>
      <MapCanvas />
      <StatusBar />
      <SearchCard />
      <MapControls />
      <RouteSheet />
    </main>
  );
}
